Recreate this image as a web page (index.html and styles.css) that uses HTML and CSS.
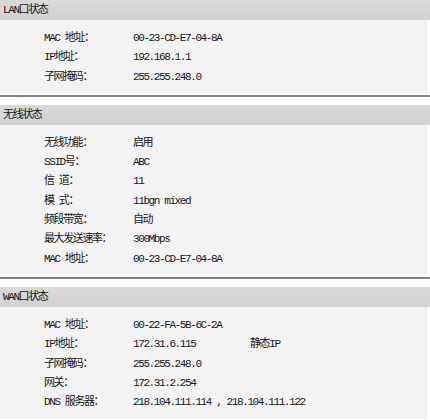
FILE: index.html
```html
<!DOCTYPE html>
<html>
<head>
<meta charset="utf-8">
<link rel="stylesheet" href="styles.css">
</head>
<body>
<div class="panel">
  <div class="hdr">LAN口状态</div>
  <div class="box">
    <div class="row"><span>MAC 地址：</span><span>00-23-CD-E7-04-8A</span></div>
    <div class="row"><span>IP地址：</span><span>192.168.1.1</span></div>
    <div class="row"><span>子网掩码：</span><span>255.255.248.0</span></div>
  </div>
  <div class="sep"></div>

  <div class="hdr">无线状态</div>
  <div class="box">
    <div class="row"><span>无线功能：</span><span>启用</span></div>
    <div class="row"><span>SSID号：</span><span>ABC</span></div>
    <div class="row"><span>信 道：</span><span>11</span></div>
    <div class="row"><span>模 式：</span><span>11bgn mixed</span></div>
    <div class="row"><span>频段带宽：</span><span>自动</span></div>
    <div class="row"><span>最大发送速率：</span><span>300Mbps</span></div>
    <div class="row"><span>MAC 地址：</span><span>00-23-CD-E7-04-8A</span></div>
  </div>
  <div class="sep"></div>

  <div class="hdr">WAN口状态</div>
  <div class="box last">
    <div class="row"><span>MAC 地址：</span><span>00-22-FA-5B-6C-2A</span></div>
    <div class="row"><span>IP地址：</span><span>172.31.6.115</span><span>静态IP</span></div>
    <div class="row"><span>子网掩码：</span><span>255.255.248.0</span></div>
    <div class="row"><span>网关：</span><span>172.31.2.254</span></div>
    <div class="row"><span>DNS 服务器：</span><span>218.104.111.114 , 218.104.111.122</span></div>
  </div>
</div>
</body>
</html>
```
FILE: styles.css
```css
html, body {
  margin: 0;
  padding: 0;
  background: #ffffff;
}
body {
  font-family: "Liberation Mono", "Noto Sans CJK SC", monospace;
  font-size: 11px;
  letter-spacing: -1.4px;
  color: #161616;
  width: 430px;
  height: 420px;
  overflow: hidden;
}
.hdr {
  height: 20px;
  line-height: 20px;
  padding-left: 3px;
  background: linear-gradient(#d9d9d9, #d2d2d2);
  color: #141414;
}
.box {
  background: #f3f3f3;
  padding: 9px 0 6px 44px;
  margin-right: 3px;
  border-right: 1px solid #f1e3df;
}
.box.last {
  padding-bottom: 7px;
}
.row {
  display: grid;
  grid-template-columns: 89px 117px auto;
  height: 19.3px;
  line-height: 19.3px;
  white-space: nowrap;
}
.sep {
  height: 2px;
  margin: 2px 0 8px;
  background: #85817b;
}
```
